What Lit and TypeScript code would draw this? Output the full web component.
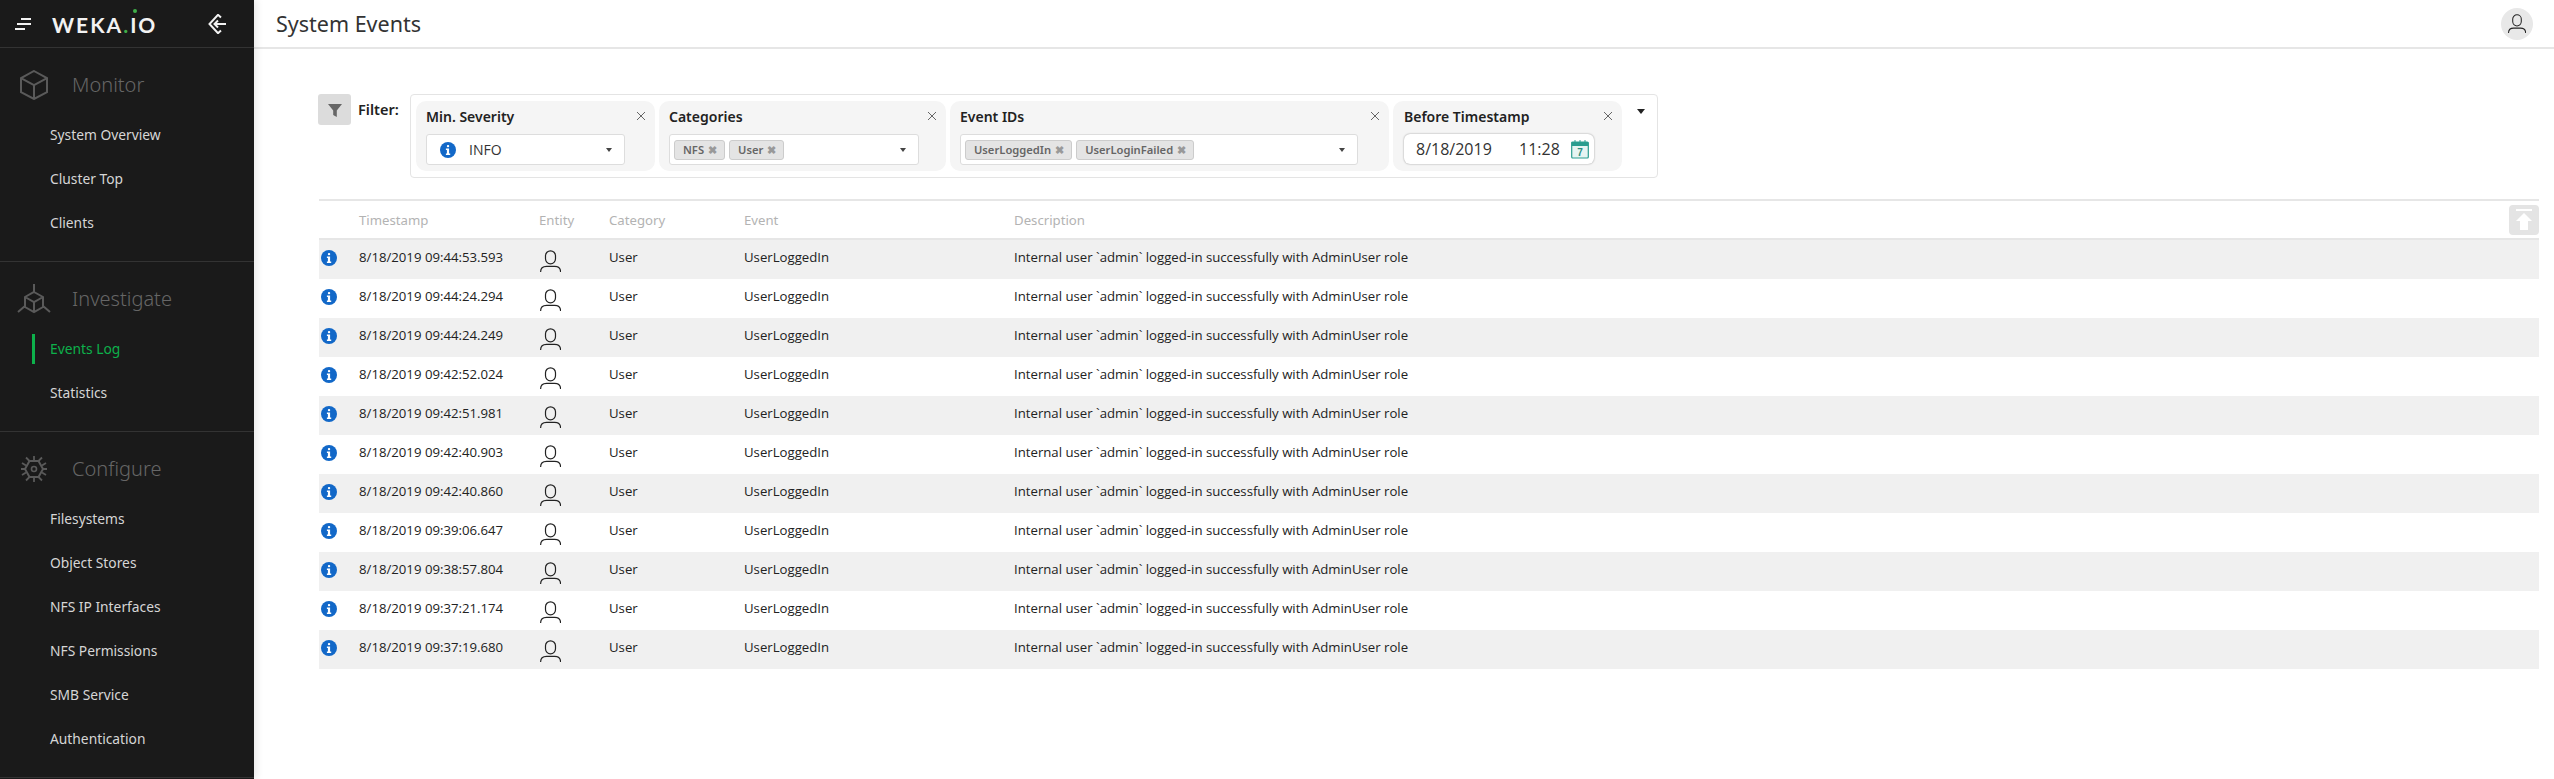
import { LitElement, html, css, svg } from 'lit';
import { customElement } from 'lit/decorators.js';

const personIcon = svg`<rect x="5.500" y="0.800" width="10" height="13" rx="5" fill="none" stroke="#222" stroke-width="1.200"/><path d="M0.600 22c0-3.200 2-5.600 6-5.600h8c4 0 6 2.400 6 5.600" fill="none" stroke="#222" stroke-width="1.200"/>`;

const infoIcon = html`<svg class="info" viewBox="0 0 16 16" width="16" height="16"><circle cx="8" cy="8" r="8" fill="#1268c8"/><rect x="6.900" y="3" width="2.300" height="2.300" rx="1" fill="#fff"/><path d="M5.900 6.600h3.200v5h1.100v1.300H5.900v-1.300h1v-3.700h-1z" fill="#fff"/></svg>`;

const caret = html`<span class="caret"></span>`;

const cube = html`<svg class="sec-icon" viewBox="0 0 28 30" width="28" height="30" fill="none" stroke="#5a5a5a" stroke-width="2"><path d="M14 1l13 7.200v14L14 29 1 22.200v-14z"/><path d="M1 8.200l13 7 13-7M14 15.200V29"/></svg>`;
const netCube = html`<svg class="sec-icon" viewBox="0 0 34 30" width="34" height="30" fill="none" stroke="#5a5a5a" stroke-width="2"><path d="M17 0v8M17 8l9 5v10l-9 5-9-5V13zM8 13l9 5 9-5M17 18v10M8 22l-7 6M26 22l7 6"/></svg>`;
const gear = html`<svg class="sec-icon" viewBox="0 0 28 28" width="28" height="28" fill="none" stroke="#5a5a5a" stroke-width="2"><path d="M5 14l4.500-8h9l4.500 8-4.500 8h-9z"/><circle cx="14" cy="14" r="2.500" stroke-width="1.600"/><path d="M14 1v5M14 22v5M1 14h4M23 14h4M6 2.500l3.500 3.500M22 2.500L18.500 6M6 25.500L9.500 22M22 25.500L18.500 22M2 8l4 2.500M26 8l-4 2.500M2 20l4-2.500M26 20l-4-2.500" stroke-width="1.800"/></svg>`;

type Section = { title: string; icon: unknown; items: string[]; active?: string };

const sections: Section[] = [
  { title: 'Monitor', icon: cube, items: ['System Overview', 'Cluster Top', 'Clients'] },
  { title: 'Investigate', icon: netCube, items: ['Events Log', 'Statistics'], active: 'Events Log' },
  {
    title: 'Configure',
    icon: gear,
    items: ['Filesystems', 'Object Stores', 'NFS IP Interfaces', 'NFS Permissions', 'SMB Service', 'Authentication'],
  },
];

const times = [
  '09:44:53.593', '09:44:24.294', '09:44:24.249', '09:42:52.024', '09:42:51.981', '09:42:40.903',
  '09:42:40.860', '09:39:06.647', '09:38:57.804', '09:37:21.174', '09:37:19.680',
];

@customElement('app-root')
export class AppRoot extends LitElement {
  static styles = css`
    :host {
      display: flex;
      width: 2554px;
      height: 779px;
      overflow: hidden;
      background: #fff;
      font-family: 'Open Sans', sans-serif;
      color: #222;
    }
    * { box-sizing: border-box; }

    /* sidebar */
    .side {
      width: 254px;
      flex: none;
      background: #1a1a1a;
      box-shadow: 2px 0 8px rgba(0, 0, 0, 0.1);
      font-family: 'Noto Sans', sans-serif;
      z-index: 1;
    }
    .brand {
      height: 48px;
      border-bottom: 1px solid #333;
      display: flex;
      align-items: center;
      padding-left: 15px;
    }
    .logo {
      position: relative;
      margin-left: 21px;
      width: 156px;
      color: #f2f2f2;
      font: 700 21px 'Lato', sans-serif;
      letter-spacing: 2px;
      white-space: nowrap;
      padding-top: 1px;
    }
    .logo b { color: #3fae49; font-weight: 700; }
    .logo i {
      position: absolute;
      left: 81px;
      top: -2px;
      width: 4px;
      height: 4px;
      border-radius: 50%;
      background: #3fae49;
    }
    .section {
      border-bottom: 1px solid #333;
      padding-bottom: 16px;
    }
    .sec-head {
      height: 65px;
      padding-top: 8px;
      display: flex;
      align-items: center;
      position: relative;
      padding-left: 72px;
      font-size: 20px;
      font-weight: 300;
      color: #666;
    }
    .sec-icon {
      position: absolute;
      left: 34px;
      top: 50%;
      transform: translate(-50%, -50%);
      margin-top: 4px;
    }
    .item {
      height: 44px;
      display: flex;
      align-items: center;
      padding-left: 50px;
      padding-bottom: 1px;
      font-size: 13.800px;
      color: #d6d6d6;
      position: relative;
    }
    .item.active { color: #0db14b; }
    .item.active::before {
      content: '';
      position: absolute;
      left: 32px;
      top: 7px;
      width: 3px;
      height: 30px;
      background: #0db14b;
    }

    /* main */
    .main { flex: 1; min-width: 0; position: relative; }
    .top {
      height: 49px;
      border-bottom: 2px solid #e6e6e6;
      display: flex;
      align-items: center;
      justify-content: space-between;
      padding: 0 21px 0 22px;
      font: 400 21.500px 'Noto Sans', sans-serif;
      color: #333;
    }
    .avatar {
      width: 32px;
      height: 32px;
      border-radius: 50%;
      background: #e8e8e8;
      display: flex;
      align-items: center;
      justify-content: center;
    }

    .filters {
      display: flex;
      align-items: flex-start;
      margin: 45px 0 0 64px;
      font-family: 'Noto Sans', sans-serif;
    }
    .fbtn {
      width: 33px;
      height: 31px;
      background: #dcdcdc;
      border-radius: 3px;
      display: flex;
      align-items: center;
      justify-content: center;
    }
    .flabel {
      margin: 5px 0 0 7px;
      width: 52px;
      font-size: 14.500px;
      font-weight: 600;
      color: #222;
    }
    .fbox {
      width: 1248px;
      height: 84px;
      border: 1px solid #e4e4e4;
      border-radius: 4px;
      padding: 6px 5px;
      display: flex;
      gap: 4px;
      position: relative;
    }
    .panel {
      height: 70px;
      background: #f5f5f5;
      border-radius: 10px;
      padding: 0 10px;
      position: relative;
    }
    .p-sev { width: 239px; }
    .p-cat { width: 287px; }
    .p-evt { width: 439px; }
    .p-ts { width: 229px; padding-left: 11px; }
    .ptitle {
      font-size: 14px;
      font-weight: 600;
      height: 31px;
      margin-bottom: 2px;
      display: flex;
      align-items: center;
      color: #222;
    }
    .close {
      position: absolute;
      right: 9px;
      top: 10px;
    }
    .select {
      height: 31px;
      background: #fff;
      border: 1px solid #ddd;
      border-radius: 3px;
      display: flex;
      align-items: center;
      padding-left: 4px;
      gap: 4px;
      position: relative;
    }
    .p-sev .select { width: 199px; padding-left: 13px; gap: 13px; font: 400 14px 'Open Sans', sans-serif; color: #333; }
    .p-cat .select { width: 250px; }
    .p-evt .select { width: 398px; }
    .caret {
      position: absolute;
      right: 12px;
      top: 13px;
      border-left: 3px solid transparent;
      border-right: 3px solid transparent;
      border-top: 4px solid #444;
    }
    .tag {
      height: 20px;
      background: #e4e4e4;
      border: 1px solid #ccc;
      border-radius: 3px;
      display: flex;
      align-items: center;
      gap: 4px;
      padding: 0 7px 0 8px;
      font-size: 11.200px;
      font-weight: 600;
      color: #666;
      white-space: nowrap;
    }
    .tag span { color: #999; font-size: 11px; font-weight: 700; }
    .date {
      width: 190px;
      height: 30px;
      margin-top: 2px;
      background: #fff;
      border-radius: 6px;
      box-shadow: 0 0 2px rgba(0, 0, 0, 0.4);
      display: flex;
      align-items: center;
      padding: 0 4px 0 12px;
      font: 400 16px 'Open Sans', sans-serif;
      color: #333;
    }
    .date .d { width: 103px; }
    .date .t { width: 52px; }
    .more {
      position: absolute;
      right: 12px;
      top: 14px;
      border-left: 4px solid transparent;
      border-right: 4px solid transparent;
      border-top: 5px solid #222;
    }

    /* table */
    .table {
      margin: 21px 15px 0 65px;
      border-top: 2px solid #e6e6e6;
      position: relative;
    }
    .row {
      display: grid;
      grid-template-columns: 40px 180px 70px 135px 270px 1fr;
      align-items: center;
      height: 39px;
      font-size: 13.200px;
      color: #222;
    }
    .row > div { padding-bottom: 5px; }
    .row > .ic { padding: 0 0 4px 2px; display: flex; }
    .row > .ent { padding: 3px 0 0 1px; display: flex; }
    .row:nth-child(even) { background: #f0f0f0; }
    .row:nth-child(odd):not(.head) { background: #fff; }
    .head {
      height: 39px;
      border-bottom: 2px solid #e6e6e6;
      color: #b3b3b3;
      font: 400 13.200px 'Noto Sans', sans-serif;
    }
    .head > div { padding-bottom: 0; }
    .up {
      position: absolute;
      right: 0;
      top: 4px;
      width: 30px;
      height: 30px;
      background: #e4e4e4;
      border-radius: 4px;
      display: flex;
      align-items: center;
      justify-content: center;
    }
  `;

  private x() {
    return html`<svg class="close" width="10" height="10" viewBox="0 0 10 10" stroke="#666" stroke-width="1"><path d="M1 1l8 8M9 1l-8 8"/></svg>`;
  }

  render() {
    return html`
      <nav class="side">
        <div class="brand">
          <svg width="16" height="12" viewBox="0 0 16 12" fill="none" stroke="#f2f2f2" stroke-width="2"><path d="M6 1h10M2 6h14M0 11h10"/></svg>
          <div class="logo">WEKA<b>.</b>IO<i></i></div>
          <svg width="18" height="20" viewBox="0 0 18 20" fill="none" stroke="#f2f2f2" stroke-width="2"><path d="M13 3.500L10 0.800 1.500 10l8.500 9.200 3-2.700M6 10h12M10 6.500L6.500 10l3.500 3.500"/></svg>
        </div>
        ${sections.map(
          (s) => html`<div class="section">
            <div class="sec-head">${s.icon}${s.title}</div>
            ${s.items.map((i) => html`<div class="item ${i === s.active ? 'active' : ''}">${i}</div>`)}
          </div>`,
        )}
      </nav>
      <div class="main">
        <div class="top">
          System Events
          <div class="avatar"><svg width="18" height="19" viewBox="0 0 21 22">${personIcon}</svg></div>
        </div>
        <div class="filters">
          <div class="fbtn"><svg width="14" height="14" viewBox="0 0 14 14" fill="#666"><path d="M0 1h14L8.800 7.500V14L5.200 12V7.500z"/></svg></div>
          <div class="flabel">Filter:</div>
          <div class="fbox">
            <div class="panel p-sev">
              <div class="ptitle">Min. Severity</div>${this.x()}
              <div class="select">${infoIcon}INFO${caret}</div>
            </div>
            <div class="panel p-cat">
              <div class="ptitle">Categories</div>${this.x()}
              <div class="select">
                <div class="tag">NFS <span>✖</span></div>
                <div class="tag">User <span>✖</span></div>
                ${caret}
              </div>
            </div>
            <div class="panel p-evt">
              <div class="ptitle">Event IDs</div>${this.x()}
              <div class="select">
                <div class="tag">UserLoggedIn <span>✖</span></div>
                <div class="tag">UserLoginFailed <span>✖</span></div>
                ${caret}
              </div>
            </div>
            <div class="panel p-ts">
              <div class="ptitle">Before Timestamp</div>${this.x()}
              <div class="date">
                <span class="d">8/18/2019</span><span class="t">11:28</span>
                <svg width="18" height="19" viewBox="0 0 18 19"><rect x="0.700" y="2" width="16.600" height="16" rx="1" fill="#e6f4f2" stroke="#2a9d8f" stroke-width="1.200"/><rect x="0.700" y="2" width="16.600" height="4" fill="#2a9d8f"/><path d="M4 0v3M9 0v3M14 0v3" stroke="#2a9d8f"/><text x="9" y="16" text-anchor="middle" font-size="10" font-weight="700" font-family="Liberation Sans, sans-serif" fill="#2a8d80">7</text></svg>
              </div>
            </div>
            <span class="more"></span>
          </div>
        </div>
        <div class="table">
          <div class="row head">
            <div></div><div>Timestamp</div><div>Entity</div><div>Category</div><div>Event</div><div>Description</div>
          </div>
          ${times.map(
            (t) => html`<div class="row">
              <div class="ic">${infoIcon}</div>
              <div>8/18/2019 ${t}</div>
              <div class="ent"><svg width="21" height="22" viewBox="0 0 21 22">${personIcon}</svg></div>
              <div>User</div>
              <div>UserLoggedIn</div>
              <div>Internal user \`admin\` logged-in successfully with AdminUser role</div>
            </div>`,
          )}
          <div class="up"><svg width="18" height="22" viewBox="0 0 18 22" fill="#fff"><rect x="1" y="0" width="16" height="2"/><path d="M9 4l8 8h-4v9H5v-9H1z"/></svg></div>
        </div>
      </div>
    `;
  }
}
